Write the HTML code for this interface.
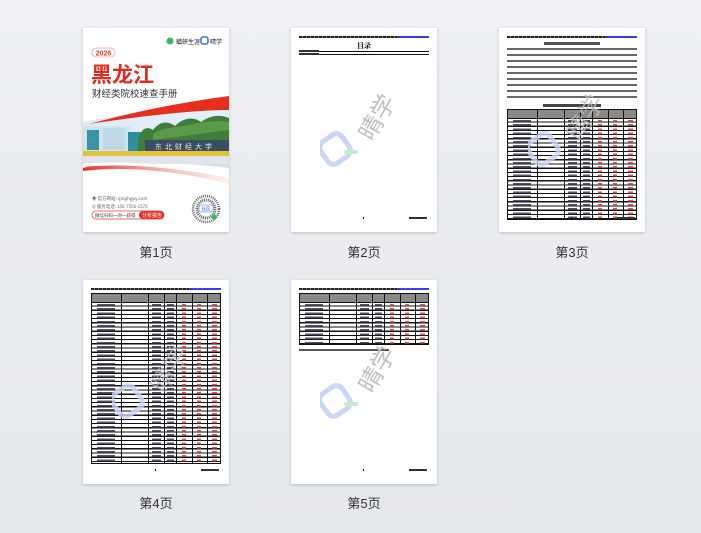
<!DOCTYPE html>
<html><head><meta charset="utf-8"><style>
*{margin:0;padding:0;box-sizing:border-box}
body{width:701px;height:533px;overflow:hidden;background:linear-gradient(180deg,#eef0f3,#e5e8ec);font-family:"Liberation Sans","Noto Sans CJK SC",sans-serif;position:relative}
.pg{position:absolute;width:146px;height:204px;background:#fff;box-shadow:0 1px 3px rgba(0,0,0,.18);overflow:hidden}
.lbl{position:absolute;width:146px;text-align:center;font-size:13px;color:#333}
.hdr{position:absolute;left:8px;top:8px;width:98px;height:2px;background:repeating-linear-gradient(90deg,#222 0 3px,#777 3px 4px)}
.hdr2{position:absolute;left:106px;top:8px;width:32px;height:2px;background:#3a3aff}
.foot{position:absolute;right:10px;bottom:13px;width:18px;height:2px;background:#333}
.dot{position:absolute;left:72px;bottom:13px;width:1px;height:2px;background:#000}
.tbl{position:absolute;border:1.5px solid #111;background:
repeating-linear-gradient(180deg,transparent 0 3px,#111 3px 4.2px),
linear-gradient(#fff,#fff)}
.tbl .th{position:absolute;left:0;right:0;top:0;height:9px;background:#8a8a8a;border-bottom:1px solid #111}
.tbl .v{position:absolute;top:0;bottom:0;width:1px;background:#111}
.tbl .c{position:absolute;top:10px;bottom:0;background:repeating-linear-gradient(180deg,#2a2a40 0 2px,transparent 2px 4.2px);opacity:.8}
.tbl .r{background:repeating-linear-gradient(180deg,#c03030 0 2px,transparent 2px 4.2px)}
.wm{position:absolute;left:29px;top:56px;width:90px;height:90px;pointer-events:none}
</style></head><body>

<!-- Page 1 cover -->
<div class="pg" style="left:83px;top:28px">
<svg width="146" height="204" viewBox="0 0 146 204" style="position:absolute;left:0;top:0">
<circle cx="87" cy="13" r="3.5" fill="#2cbf5a"/>
<text x="93" y="16" font-size="6" fill="#222" font-family="Noto Sans CJK SC">蝤蛴生涯</text>
<rect x="118" y="9" width="7" height="7" rx="2" fill="none" stroke="#3a6cf0" stroke-width="1.5"/>
<text x="127" y="16" font-size="6" fill="#222" font-family="Noto Sans CJK SC">晴学</text>
<rect x="9" y="20" width="23" height="9" rx="4.5" fill="#fff" stroke="#f0a0a0" stroke-width=".8"/>
<text x="20.5" y="27.3" font-size="7" font-weight="bold" fill="#e23a2a" text-anchor="middle">2026</text>
<text x="8" y="54" font-size="21" font-weight="bold" fill="#e02b1f" font-family="Noto Sans CJK SC">黑龙江</text>
<text x="9" y="69" font-size="9.5" fill="#333" font-family="Noto Sans CJK SC">财经类院校速查手册</text>
<defs>
<linearGradient id="sky" x1="0" y1="0" x2="0" y2="1"><stop offset="0" stop-color="#eaf2fb"/><stop offset="1" stop-color="#cfe0f0"/></linearGradient>
<linearGradient id="rb" x1="0" y1="0" x2="1" y2="0"><stop offset="0" stop-color="#e8321f"/><stop offset="1" stop-color="#f7b4a8" stop-opacity=".2"/></linearGradient>
</defs>
<path d="M0 94 C40 86 90 78 146 76 L146 140 C100 134 50 134 0 138 Z" fill="url(#sky)"/>
<rect x="0" y="98" width="48" height="26" fill="#cfe4ee"/>
<rect x="4" y="102" width="12" height="20" fill="#3b93a3"/>
<rect x="20" y="100" width="22" height="22" fill="#bfd9e6"/>
<rect x="45" y="104" width="14" height="19" fill="#2d8fa0"/>
<path d="M55 112 C58 100 64 98 70 102 C76 94 84 92 92 98 C100 90 110 88 118 94 C126 88 136 86 146 90 L146 124 L55 124Z" fill="#3f7d3a"/>
<path d="M70 106 C80 98 96 100 110 96 C120 94 132 92 146 94 L146 102 L70 112Z" fill="#5c9a4a"/>
<rect x="62" y="112" width="84" height="12" fill="#3b4d60"/>
<text x="72" y="121" font-size="7" fill="#e8e8e8" font-family="Noto Sans CJK SC" letter-spacing="3">东北财经大学</text>
<rect x="0" y="123" width="146" height="5" fill="#e1c43a"/>
<rect x="0" y="128" width="146" height="8" fill="#dfe5ea"/>
<path d="M6 96 C50 84 100 74 146 68 L146 82 C110 82 60 88 6 96Z" fill="#e5301d"/>
<path d="M0 140 C30 132 80 134 146 150 L146 156 C90 142 40 138 0 143Z" fill="url(#rb)"/>
<path d="M0 136 C40 132 90 136 146 146 L146 150 C90 139 40 135 0 139Z" fill="#fff"/>
<text x="9" y="172" font-size="4.5" fill="#666" font-family="Noto Sans CJK SC">◉ 官方网站: qinghgpy.com</text>
<text x="9" y="180" font-size="4.5" fill="#666" font-family="Noto Sans CJK SC">✆ 服务电话: 156-7556-1570</text>
<rect x="9" y="183" width="72" height="8" rx="4" fill="#fff" stroke="#e04030" stroke-width=".7"/>
<rect x="56" y="183" width="25" height="8" rx="4" fill="#e5301d"/>
<text x="12" y="189" font-size="4.5" fill="#333" font-family="Noto Sans CJK SC">微信扫码一对一获得</text>
<text x="59" y="189" font-size="5" fill="#fff" font-family="Noto Sans CJK SC">分析报告</text>
<circle cx="123" cy="181" r="13" fill="#fff" stroke="#666" stroke-width="2.5" stroke-dasharray="1 1"/>
<circle cx="123" cy="181" r="9" fill="none" stroke="#777" stroke-width="3" stroke-dasharray="1.2 .8"/>
<rect x="116" y="177" width="14" height="7" rx="2" fill="#fff" stroke="#3a6cf0" stroke-width=".5"/>
<text x="123" y="182.5" font-size="4.5" fill="#3a6cf0" text-anchor="middle" font-family="Noto Sans CJK SC">社区</text>
<circle cx="131" cy="189" r="2.5" fill="#2cbf5a"/>
</svg>
</div>
<div class="lbl" style="left:83px;top:242px">第1页</div>

<!-- Page 2 -->
<div class="pg" style="left:291px;top:28px">
<div class="hdr"></div><div class="hdr2"></div>
<div style="position:absolute;left:0;width:146px;top:13px;text-align:center;font-size:7px;font-weight:bold;font-family:'Noto Serif CJK SC',serif">目录</div>
<div style="position:absolute;left:8px;top:23px;width:130px;height:1px;background:#111"></div>
<div style="position:absolute;left:8px;top:26px;width:130px;height:1px;background:#111"></div>
<div style="position:absolute;left:8px;top:22px;width:20px;height:6px;background:repeating-linear-gradient(180deg,#333 0 2px,transparent 2px 3px)"></div>
<div class="dot"></div><div class="foot"></div>
<svg class="wm" viewBox="0 0 90 90"><rect x="2" y="52" width="26" height="26" rx="7" fill="none" stroke="#c9d6f8" stroke-width="5" transform="rotate(-35 15 65)"/><rect x="24" y="66" width="14" height="4" rx="2" fill="#bff0c8"/><text x="60" y="40" font-size="24" fill="#c0c0c0" transform="rotate(-60 60 35)" text-anchor="middle" font-family="Noto Sans CJK SC">晴学</text></svg>
</div>
<div class="lbl" style="left:291px;top:242px">第2页</div>

<!-- Page 3 -->
<div class="pg" style="left:499px;top:28px">
<div class="hdr"></div><div class="hdr2"></div>
<div style="position:absolute;left:45px;top:14px;width:56px;height:3px;background:#555"></div>
<div style="position:absolute;left:8px;top:20px;width:130px;height:53px;background:repeating-linear-gradient(180deg,#444 0 2px,transparent 2px 6px);opacity:.8"></div>
<div style="position:absolute;left:44px;top:76px;width:58px;height:3px;background:#444"></div>
<div class="tbl" style="left:8px;top:81px;width:130px;height:111px">
<div class="th"></div>
<div class="v" style="left:29px"></div><div class="v" style="left:56px"></div><div class="v" style="left:72px"></div><div class="v" style="left:84px"></div><div class="v" style="left:100px"></div><div class="v" style="left:115px"></div>
<div class="c" style="left:5px;width:18px"></div><div class="c" style="left:60px;width:9px"></div><div class="c" style="left:75px;width:7px"></div><div class="c r" style="left:90px;width:4px"></div><div class="c r" style="left:105px;width:4px"></div><div class="c r" style="left:120px;width:5px"></div>
</div>
<div class="dot"></div><div class="foot"></div>
<svg class="wm" viewBox="0 0 90 90"><rect x="2" y="52" width="26" height="26" rx="7" fill="none" stroke="#c9d6f8" stroke-width="5" transform="rotate(-35 15 65)" opacity=".8"/><text x="60" y="40" font-size="24" fill="#c0c0c0" opacity=".8" transform="rotate(-60 60 35)" text-anchor="middle" font-family="Noto Sans CJK SC">晴学</text></svg>
</div>
<div class="lbl" style="left:499px;top:242px">第3页</div>

<!-- Page 4 -->
<div class="pg" style="left:83px;top:280px">
<div class="hdr"></div><div class="hdr2"></div>
<div class="tbl" style="left:8px;top:13px;width:130px;height:171px">
<div class="th"></div>
<div class="v" style="left:29px"></div><div class="v" style="left:56px"></div><div class="v" style="left:72px"></div><div class="v" style="left:84px"></div><div class="v" style="left:100px"></div><div class="v" style="left:115px"></div>
<div class="c" style="left:5px;width:18px"></div><div class="c" style="left:60px;width:9px"></div><div class="c" style="left:75px;width:7px"></div><div class="c r" style="left:90px;width:4px"></div><div class="c r" style="left:105px;width:4px"></div><div class="c r" style="left:120px;width:5px"></div>
</div>
<div class="dot"></div><div class="foot"></div>
<svg class="wm" viewBox="0 0 90 90"><rect x="2" y="52" width="26" height="26" rx="7" fill="none" stroke="#c9d6f8" stroke-width="5" transform="rotate(-35 15 65)" opacity=".8"/><text x="60" y="40" font-size="24" fill="#c0c0c0" opacity=".7" transform="rotate(-60 60 35)" text-anchor="middle" font-family="Noto Sans CJK SC">晴学</text></svg>
</div>
<div class="lbl" style="left:83px;top:493px">第4页</div>

<!-- Page 5 -->
<div class="pg" style="left:291px;top:280px">
<div class="hdr"></div><div class="hdr2"></div>
<div class="tbl" style="left:8px;top:13px;width:130px;height:52px">
<div class="th"></div>
<div class="v" style="left:29px"></div><div class="v" style="left:56px"></div><div class="v" style="left:72px"></div><div class="v" style="left:84px"></div><div class="v" style="left:100px"></div><div class="v" style="left:115px"></div>
<div class="c" style="left:5px;width:18px"></div><div class="c" style="left:60px;width:9px"></div><div class="c" style="left:75px;width:7px"></div><div class="c r" style="left:90px;width:4px"></div><div class="c r" style="left:105px;width:4px"></div><div class="c r" style="left:120px;width:5px"></div>
</div>
<div style="position:absolute;left:8px;top:69px;width:90px;height:2px;background:#555"></div>
<div class="dot"></div><div class="foot"></div>
<svg class="wm" viewBox="0 0 90 90"><rect x="2" y="52" width="26" height="26" rx="7" fill="none" stroke="#c9d6f8" stroke-width="5" transform="rotate(-35 15 65)"/><rect x="24" y="66" width="14" height="4" rx="2" fill="#bff0c8"/><text x="60" y="40" font-size="24" fill="#c0c0c0" transform="rotate(-60 60 35)" text-anchor="middle" font-family="Noto Sans CJK SC">晴学</text></svg>
</div>
<div class="lbl" style="left:291px;top:493px">第5页</div>
</body></html>
